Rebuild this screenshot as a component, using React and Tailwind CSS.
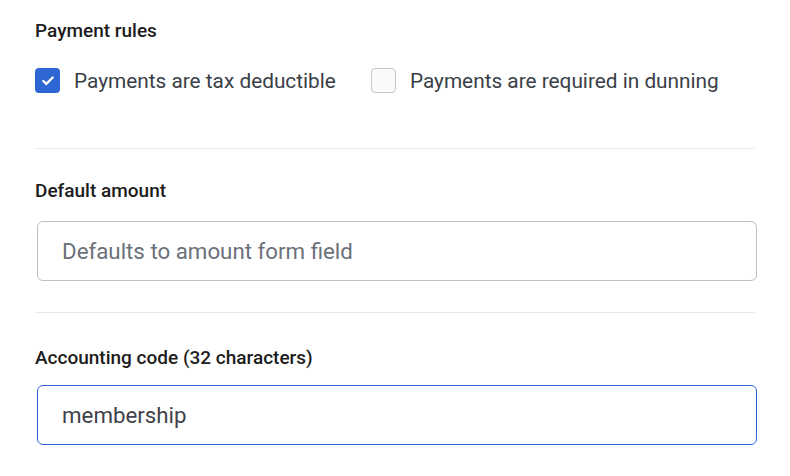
import { Check } from 'lucide-react'

const CheckboxItem = ({ checked, label }) => (
  <label className="flex items-center gap-[14px]">
    {checked ? (
      <span className="flex h-[25px] w-[25px] items-center justify-center rounded-[4px] bg-[#2e66d4]">
        <Check className="h-[14px] w-[14px] text-white" strokeWidth={4} />
      </span>
    ) : (
      <span className="h-[25px] w-[25px] rounded-[4px] border border-[#c8c8c8] bg-[#fafafa]" />
    )}
    <span className="text-[20.8px] leading-6 text-[#3a3f47]">{label}</span>
  </label>
)

const SectionLabel = ({ children }) => (
  <p className="text-[19px] font-medium leading-6 text-[#1c1c1c]">{children}</p>
)

export default function App() {
  return (
    <div className="min-h-screen bg-white" style={{ fontFamily: 'Roboto, "Liberation Sans", sans-serif' }}>
      <div className="ml-[35px] w-[722px] pt-[19px]">
        <SectionLabel>Payment rules</SectionLabel>
        <div className="mt-[25px] flex items-center gap-[35px]">
          <CheckboxItem checked label="Payments are tax deductible" />
          <CheckboxItem label="Payments are required in dunning" />
        </div>

        <div className="mt-[55px] mr-[2px] border-t border-[#e8e8e8]" />

        <div className="mt-[30px]">
          <SectionLabel>Default amount</SectionLabel>
          <input
            className="mt-[18px] ml-[2px] h-[60px] w-[720px] rounded-[6px] border border-[#bfbfbf] px-[24px] text-[22.3px] text-[#3a3f47] placeholder:text-[#6b7079] outline-none"
            placeholder="Defaults to amount form field"
          />
        </div>

        <div className="mt-[31px] mr-[2px] border-t border-[#e8e8e8]" />

        <div className="mt-[33px]">
          <SectionLabel>Accounting code (32 characters)</SectionLabel>
          <input
            className="mt-[15px] ml-[2px] h-[60px] w-[720px] rounded-[6px] border border-[#2e66d4] px-[24px] text-[22.3px] text-[#3f4248] outline-none"
            defaultValue="membership"
          />
        </div>
      </div>
    </div>
  )
}
